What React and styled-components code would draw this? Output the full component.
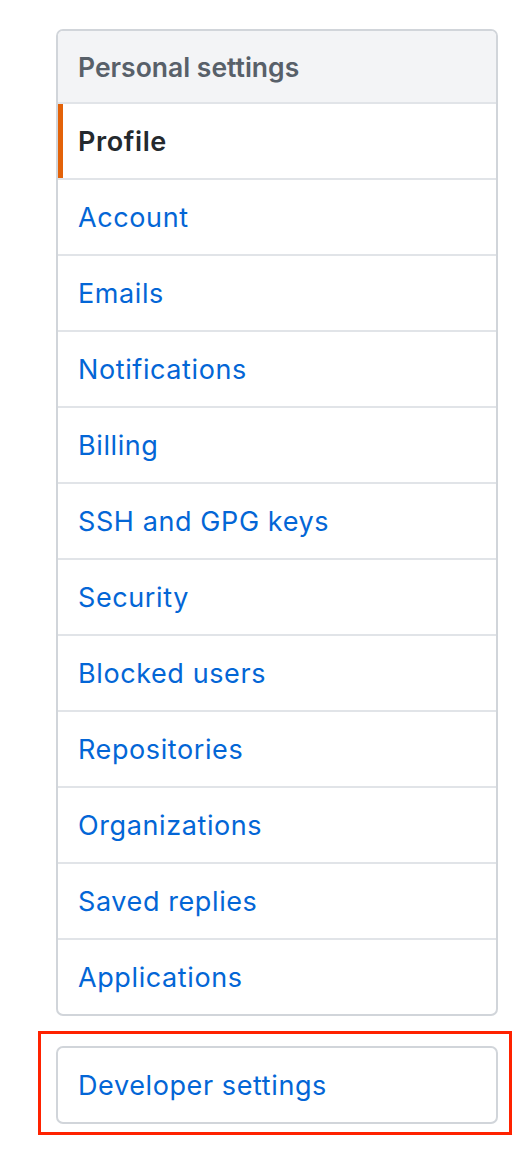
import styled, { createGlobalStyle } from "styled-components";

const GlobalStyle = createGlobalStyle`
  html, body {
    margin: 0;
    padding: 0;
    background: #fff;
  }
  body {
    font-family: Inter, "Liberation Sans", Arial, sans-serif;
    -webkit-font-smoothing: antialiased;
  }
`;

const Page = styled.div`
  width: 526px;
  padding: 29px 0 0 38px;
  box-sizing: border-box;
`;

const Menu = styled.nav`
  display: flex;
  flex-direction: column;
  width: 442px;
  margin-left: ${(p) => (p.$inset ? "18px" : "0")};
  border: 2px solid #d1d5da;
  border-radius: 7px;
  overflow: hidden;
  box-sizing: border-box;
`;

const MenuHeading = styled.h3`
  margin: 0;
  height: 73px;
  display: flex;
  align-items: center;
  padding: 0 20px;
  background: #f3f4f6;
  border-bottom: 2px solid #e1e4e8;
  font-size: 26.5px;
  font-weight: 600;
  color: #586069;
  box-sizing: border-box;
`;

const MenuItem = styled.a`
  position: relative;
  display: flex;
  align-items: center;
  height: 76px;
  padding: 0 20px;
  border-bottom: 2px solid #e1e4e8;
  font-size: 27px;
  letter-spacing: 0.6px;
  font-weight: ${(p) => (p.$selected ? 600 : 400)};
  color: ${(p) => (p.$selected ? "#24292e" : "#0366d6")};
  text-decoration: none;
  box-sizing: border-box;

  &:last-child {
    border-bottom: none;
    height: 74px;
  }

  ${(p) =>
    p.$selected &&
    `
    &::before {
      content: "";
      position: absolute;
      left: 0;
      top: 0;
      bottom: 0;
      width: 5px;
      background: #e36209;
    }
  `}
`;

const Highlight = styled.div`
  width: 474px;
  margin-top: 15px;
  padding: 12px 9px 8px 15px;
  border: 3.5px solid #ff2200;
  box-sizing: border-box;
`;

const items = [
  "Profile",
  "Account",
  "Emails",
  "Notifications",
  "Billing",
  "SSH and GPG keys",
  "Security",
  "Blocked users",
  "Repositories",
  "Organizations",
  "Saved replies",
  "Applications",
];

export default function App() {
  return (
    <>
      <GlobalStyle />
      <Page>
        <Menu $inset>
          <MenuHeading>Personal settings</MenuHeading>
          {items.map((label, i) => (
            <MenuItem key={label} href="#" $selected={i === 0}>
              {label}
            </MenuItem>
          ))}
        </Menu>
        <Highlight>
          <Menu>
            <MenuItem href="#">Developer settings</MenuItem>
          </Menu>
        </Highlight>
      </Page>
    </>
  );
}
